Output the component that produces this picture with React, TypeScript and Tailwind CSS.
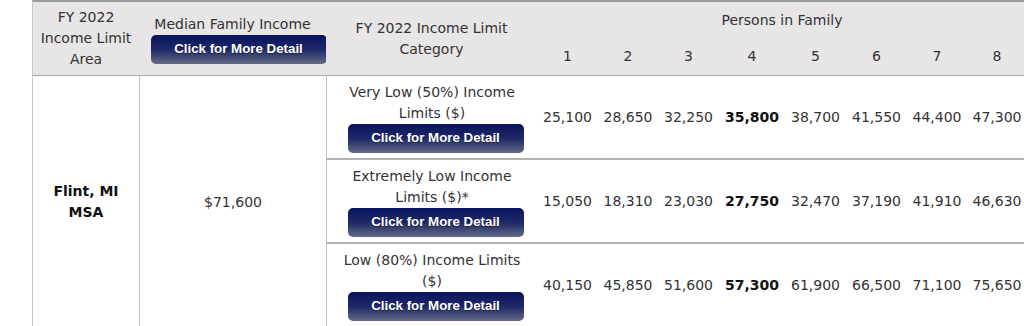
import React from "react";

function DetailButton({ shift }: { shift: string }) {
  return (
    <div
      className={`${shift} flex h-[29px] w-[176px] shrink-0 items-center justify-center rounded-[5px] bg-linear-to-b from-[#0a135e] via-[#1f2866] to-[#666a86] font-['Liberation_Sans',Arial,sans-serif] text-[13.3px] font-bold leading-none text-white [text-shadow:0_1px_1px_rgba(0,0,0,0.4)]`}
    >
      Click for More Detail
    </div>
  );
}

const rows = [
  {
    label: "Very Low (50%) Income Limits ($)",
    rowClass: "row-start-3",
    values: ["25,100", "28,650", "32,250", "35,800", "38,700", "41,550", "44,400", "47,300"],
  },
  {
    label: "Extremely Low Income Limits ($)*",
    rowClass: "row-start-4",
    values: ["15,050", "18,310", "23,030", "27,750", "32,470", "37,190", "41,910", "46,630"],
  },
  {
    label: "Low (80%) Income Limits ($)",
    rowClass: "row-start-5",
    values: ["40,150", "45,850", "51,600", "57,300", "61,900", "66,500", "71,100", "75,650"],
  },
];

const colStarts = [
  "col-start-4",
  "col-start-5",
  "col-start-6",
  "col-start-7",
  "col-start-8",
  "col-start-9",
  "col-start-10",
  "col-start-11",
];

export default function App() {
  return (
    <div className="h-[326px] w-[1024px] overflow-hidden bg-white pl-[32px] font-['DejaVu_Sans',Verdana,sans-serif] text-[14px] leading-[21px] text-[#333]">
      <div className="grid w-[995px] grid-cols-[107px_187px_211px_61px_60px_61px_66px_61px_61px_60px_60px] grid-rows-[38px_38px_84px_84px_84px]">
        {/* Header */}
        <div className="col-start-1 row-span-2 row-start-1 flex items-center justify-center border-l border-t-2 border-b border-l-[#c8c8c8] border-t-[#9c9c9c] border-b-[#a8a8a8] bg-[#e7e5e6] px-[6px] text-center">
          FY 2022 Income Limit Area
        </div>
        <div className="col-start-2 row-span-2 row-start-1 flex flex-col items-center justify-center border-t-2 border-b border-t-[#9c9c9c] border-b-[#a8a8a8] bg-[#e7e5e6] px-[6px] text-center">
          <div>Median Family Income</div>
          <DetailButton shift="ml-[12px]" />
        </div>
        <div className="col-start-3 row-span-2 row-start-1 flex items-center justify-center border-t-2 border-b border-t-[#9c9c9c] border-b-[#a8a8a8] bg-[#e7e5e6] px-[6px] text-center">
          FY 2022 Income Limit Category
        </div>
        <div className="col-span-8 col-start-4 row-start-1 flex items-center justify-center border-t-2 border-t-[#9c9c9c] bg-[#e7e5e6]">
          Persons in Family
        </div>
        {colStarts.map((c, i) => (
          <div
            key={c}
            className={`${c} row-start-2 flex items-center justify-center border-b border-b-[#a8a8a8] bg-[#e7e5e6]`}
          >
            {i + 1}
          </div>
        ))}

        {/* Body */}
        <div className="col-start-1 row-span-3 row-start-3 flex items-center justify-center border-l border-l-[#c8c8c8] px-[6px] text-center font-bold text-[#111]">
          Flint, MI MSA
        </div>
        <div className="col-start-2 row-span-3 row-start-3 flex items-center justify-center border-l border-l-[#c4c4c4] px-[6px] text-center">
          $71,600
        </div>
        {rows.map((r) => (
          <React.Fragment key={r.label}>
            <div
              className={`${r.rowClass} col-start-3 flex flex-col items-center justify-center border-l border-b-2 border-l-[#c4c4c4] border-b-[#b4b4b4] px-[6px] text-center`}
            >
              <div>{r.label}</div>
              <DetailButton shift="ml-[7px]" />
            </div>
            {r.values.map((v, i) => (
              <div
                key={i}
                className={`${r.rowClass} ${colStarts[i]} flex items-center justify-center border-b-2 border-b-[#b4b4b4] ${
                  i === 3 ? "font-bold text-[#111]" : ""
                }`}
              >
                {v}
              </div>
            ))}
          </React.Fragment>
        ))}
      </div>
    </div>
  );
}
